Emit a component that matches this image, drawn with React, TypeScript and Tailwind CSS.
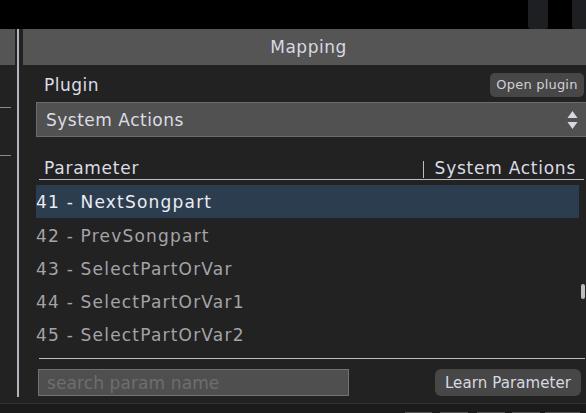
import React from "react";

const rows = [
  "41 - NextSongpart",
  "42 - PrevSongpart",
  "43 - SelectPartOrVar",
  "44 - SelectPartOrVar1",
  "45 - SelectPartOrVar2",
];

export default function App() {
  return (
    <div
      className="w-[586px] h-[413px] bg-black overflow-hidden flex flex-col"
      style={{ fontFamily: '"DejaVu Sans", Verdana, sans-serif' }}
    >
      {/* top black band */}
      <div className="h-[29px] shrink-0 flex justify-end">
        <div className="w-[20px] h-full bg-[#1d1f22] rounded-b-[3px] mr-[24px]" />
        <div className="w-[14px] h-full bg-[#1d1f22] rounded-bl-[3px]" />
      </div>

      {/* main */}
      <div className="flex h-[374px] shrink-0 bg-[#222222]">
        <div className="w-[15px] flex flex-col shrink-0">
          <div className="h-[36px] bg-[#555555]" />
          <div className="h-px w-[11px] bg-[#8a8a8a] mt-[42px]" />
          <div className="h-px w-[11px] bg-[#8a8a8a] mt-[47px]" />
        </div>
        <div className="w-[2px] ml-[2px] h-[368px] bg-[#b4b4bc] shrink-0" />
        <div className="flex-1 ml-[4px] flex flex-col min-w-0">
          <div className="h-[36px] bg-[#555555] flex items-center justify-center pl-[8px] pt-[2px] text-[17px] tracking-[0.5px] text-[#d8d8e0]">
            Mapping
          </div>
          <div className="flex flex-col pl-[13px]">
            {/* plugin row */}
            <div className="mt-[8px] h-[24px] flex items-center justify-between">
              <span className="ml-[8px] pt-[2px] text-[17px] tracking-[0.5px] text-[#dcdce4]">Plugin</span>
              <div className="w-[94px] h-[24px] mr-[2px] rounded-[5px] bg-[#474747] flex items-center justify-center text-[13px] tracking-[0.2px] text-[#d0d0d8]">
                Open plugin
              </div>
            </div>
            {/* select */}
            <div className="mt-[5px] h-[35px] -mr-[4px] bg-[#515151] border border-[#6c6c6c] flex items-center justify-between pl-[9px] pr-[11px]">
              <span className="pt-[3px] text-[17px] tracking-[0.5px] text-[#dcdce4]">System Actions</span>
              <svg width="11" height="20" viewBox="0 0 11 20">
                <path d="M5.5 1 L10.5 8 L0.5 8 Z" fill="#d8d8e0" />
                <path d="M0.5 12 L10.5 12 L5.5 19 Z" fill="#d8d8e0" />
              </svg>
            </div>
            {/* parameter header */}
            <div className="h-[43px] ml-[3px] mr-[2px] flex items-end justify-between border-b border-[#bdbdc4] pb-[1px]">
              <span className="pl-[5px] text-[17px] tracking-[0.75px] text-[#dcdce4] leading-[20px]">Parameter</span>
              <div className="flex items-end">
                <div className="w-px h-[17px] bg-[#bdbdc4] mr-[11px]" />
                <span className="text-[17px] tracking-[0.75px] text-[#dcdce4] leading-[20px] mr-[8px]">System Actions</span>
              </div>
            </div>
            {/* list */}
            <div className="relative mt-[5px] h-[165px]">
              {rows.map((r, i) => (
                <div
                  key={r}
                  className={
                    i === 0
                      ? "h-[33px] mr-[7px] pt-[2px] bg-[#2b3d4f] flex items-center text-[17px] tracking-[1.2px] text-[#ececf2]"
                      : "h-[33px] mr-[7px] pt-[4px] flex items-center text-[17px] tracking-[1.2px] text-[#a4a4a8]"
                  }
                >
                  {r}
                </div>
              ))}
              <div className="absolute right-[1px] top-[99px] w-[4px] h-[15px] rounded-[2px] bg-[#bdbdbd]" />
            </div>
            {/* bottom line */}
            <div className="mt-[8px] ml-[3px] mr-[1px] h-px bg-[#bdbdc4]" />
            {/* search row */}
            <div className="mt-[10px] flex items-center justify-between">
              <div className="ml-[2px] w-[311px] h-[27px] bg-[#4f4f4f] border border-[#727272] flex items-center pl-[8px] pt-[2px] text-[17px] tracking-[0.1px] text-[#6e6e6e]">
                search param name
              </div>
              <div className="w-[146px] h-[27px] mr-[5px] rounded-[6px] bg-[#474747] flex items-center justify-center pt-[1px] text-[15px] tracking-[0.1px] text-[#d8d8e0]">
                Learn Parameter
              </div>
            </div>
          </div>
        </div>
      </div>

      {/* bottom strip */}
      <div className="h-[10px] shrink-0 bg-[#1b1b1b] border-t border-[#303030] flex items-end">
        <div className="ml-[405px] w-[27px] h-[1px] bg-[#555]" />
        <div className="ml-[8px] w-[28px] h-[1px] bg-[#555]" />
        <div className="ml-[9px] w-[28px] h-[1px] bg-[#555]" />
        <div className="ml-[7px] w-[28px] h-[1px] bg-[#555]" />
        <div className="ml-[5px] w-[35px] h-[1px] bg-[#555]" />
      </div>
    </div>
  );
}
